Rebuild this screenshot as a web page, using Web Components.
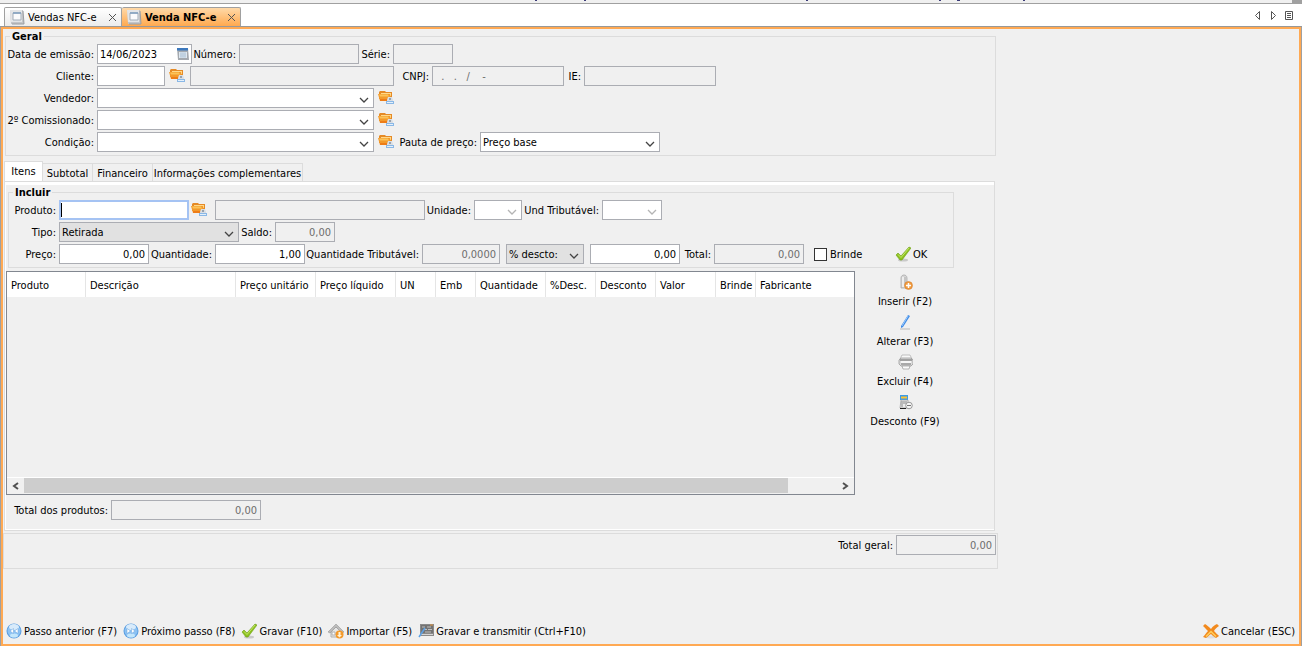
<!DOCTYPE html>
<html lang="pt-BR">
<head>
<meta charset="utf-8">
<title>Venda NFC-e</title>
<style>
    html, body {
        margin: 0;
        height: 100%;
        background: #f0f0f0;
    }
    body {
        font: 11px/15px "DejaVu Sans Condensed", "DejaVu Sans", "Noto Sans", sans-serif;
        color: #000;
        overflow: hidden;
    }
</style>
</head>
<body>
<sale-window></sale-window>

<script>
const icons = {
    form: `<path d="M1 1h13l1 14H2z" fill="#c3c5c8"/><path d="M1 1h12v12H2z" fill="#e3e5e7"/><path d="M4 4h8v7H4z" fill="#fafbfc" stroke="#a3adb8"/><path d="M4 4h8" stroke="#7f9fbf" stroke-width="1.500"/><path d="M14 2l1 13H3" fill="none" stroke="#9a9da1"/>`,
    folder: `<path d="M1 2l1-1h5l1 1h6v7H1z" fill="#e58a26"/><path d="M3 3h10v3H3z" fill="#ffd98a"/><path d="M0 4h12l1 7H2z" fill="#f39a2b"/><path d="M1 4.500h9l1 2H2z" fill="#fcc257"/><path d="M2 9h9v2H2z" fill="#ee7d17"/><path d="M10 7h4l1 3v2H9v-2z" fill="#d9dee4"/><path d="M11 8h2v2h-2z" fill="#98a2ad"/><path d="M8 11h8v3H8z" fill="#8ab8e6"/><path d="M9 12.500h6" stroke="#e4f0fb"/>`,
    calendar: `<path d="M2 2h11l1 12H3z" fill="#a4a9af"/><path d="M2 2h11v2.500H2z" fill="#3c78bc"/><path d="M4 6h8v6H4z" fill="#dfe8f0"/><path d="M5 8h6M5 10h6M6 6v6M8 6v6M10 6v6" stroke="#a9c0d6" stroke-width=".7"/>`,
    check: `<ellipse cx="8" cy="14" rx="5" ry="1.500" fill="#c9c9c9"/><path d="M1 9l2-2 3 3 8-9 2 1-9 12H5z" fill="#8cc21f" stroke="#6b9d12" stroke-width=".6"/><path d="M3 8.500l3 3L14 2" fill="none" stroke="#c4e56a"/>`,
    prev: `<circle cx="8" cy="8" r="7.500" fill="#5a9de0"/><circle cx="8" cy="8" r="6.500" fill="#8cc2f3"/><ellipse cx="8" cy="4" rx="5" ry="3" fill="#d8ebfb"/><ellipse cx="8" cy="12.500" rx="4" ry="2" fill="#c3e6fb"/><path d="M7.500 5.500v5L4 8zM12 5.500v5L8.500 8z" fill="#fff" stroke="#6ba2da" stroke-width=".5"/>`,
    next: `<circle cx="8" cy="8" r="7.500" fill="#5a9de0"/><circle cx="8" cy="8" r="6.500" fill="#8cc2f3"/><ellipse cx="8" cy="4" rx="5" ry="3" fill="#d8ebfb"/><ellipse cx="8" cy="12.500" rx="4" ry="2" fill="#c3e6fb"/><path d="M4 5.500v5L7.500 8zM8.500 5.500v5L12 8z" fill="#fff" stroke="#6ba2da" stroke-width=".5"/>`,
    home: `<path d="M3 8v6h10V8L8 4z" fill="#e6e6e6" stroke="#b0b0b0"/><path d="M0 9l8-8 8 8-2 1-6-6-6 6z" fill="#bcbcbc" stroke="#8e8e8e" stroke-width=".5"/><path d="M4 9h3v3H4z" fill="#fff" stroke="#b0b0b0"/><circle cx="11.500" cy="11.500" r="4" fill="#f39a2c"/><path d="M10.500 9h2v3H14l-2.500 2.500L9 12h1.500z" fill="#fff3d8"/>`,
    send: `<path d="M2 1h14v12H2z" fill="#8a8a8a"/><path d="M3 2h12v8H3z" fill="#737373"/><path d="M4 4h3M9 4h4M6 6.500h3M10 6.500h4M7 9h6" stroke="#c0c0c0"/><path d="M12 2h3" stroke="#e0933c"/><path d="M3 11.500h12" stroke="#d6d6d6"/><path d="M7 5L1 14" stroke="#5aa0e6" stroke-width="1.500"/>`,
    cancel: `<ellipse cx="8" cy="14" rx="6" ry="1.500" fill="#ddd"/><path d="M0 3l2-2c2 1 4 3 6 5 2-3 4-4 6-5l2 2c-2 1-4 3-5 5 2 2 4 4 5 5l-3 2c-2-1-4-3-5-4-2 1-3 3-5 4l-3-1c2-2 3-4 5-6C3 6 2 5 0 3z" fill="#f28a1e"/><path d="M3 13.500c2-2 3-3 5-5 2 2 3 3 5 5" fill="none" stroke="#ffcf5c" stroke-width="1.500"/>`,
    insert: `<path d="M4 4c0-4 6-4 6 0v10H4z" fill="#d6d6d6" stroke="#aaa" stroke-width=".8"/><path d="M6 3v10" stroke="#f6f6f6" stroke-width="1.500"/><path d="M8 3v8" stroke="#b4b4b4"/><circle cx="11.500" cy="11.500" r="4" fill="#f09a3e" stroke="#d07a24" stroke-width=".5"/><path d="M11.500 9v5M9 11.500h5" stroke="#fff" stroke-width="1.500"/>`,
    pencil: `<path d="M3 15h10" stroke="#b9b9b9"/><path d="M11 1l2 1-7 11-2 1v-2z" fill="#3f8be6"/><path d="M11 2L5 12" stroke="#9cc9fa"/>`,
    printer: `<path d="M5 1h8l2 4H3z" fill="#f8f8f8" stroke="#aaa" stroke-width=".7"/><path d="M2 6l2-2h10l2 2v4l-2 2H4l-2-2z" fill="#dcdcdc" stroke="#999" stroke-width=".8"/><path d="M3 6h12" stroke="#666"/><path d="M4 8h10" stroke="#fff" stroke-width="1.500"/><path d="M4 10h10" stroke="#777"/><path d="M5 12h8l-1 3H6z" fill="#fafafa" stroke="#999" stroke-width=".7"/>`,
    discount: `<path d="M3 1h8v5H3z" fill="#3b9be8"/><path d="M4 2.500h6v2H4z" fill="#ffc22e"/><path d="M4 6h7v8H3z" fill="#ececec" stroke="#999" stroke-width=".7"/><path d="M5 7v6M7 7v3M9 7v3" stroke="#888"/><path d="M3 14.500h6" stroke="#222"/><circle cx="12" cy="11.500" r="3.300" fill="#f5f5f5" stroke="#999"/><path d="M10 11.500h4" stroke="#777"/>`
};

const chevron = `<svg class="chevron" width="10" height="6" viewBox="0 0 10 6" aria-hidden="true"><path d="M1 1l4 4 4-4" fill="none" stroke="currentColor" stroke-width="1.300"/></svg>`;

// Shared look of the captioned inputs and drop-downs
const fieldStyle = `
    :host {
        display: inline-flex;
        align-items: center;
        flex: none;
        height: 22px;
    }
    label {
        box-sizing: border-box;
        width: var(--label, auto);
        padding-right: 3px;
        text-align: right;
        white-space: nowrap;
        display: flex;
        justify-content: flex-end;
    }
    .box {
        display: grid;
        align-items: center;
        width: var(--field, 90px);
        height: 20px;
    }
    .box > * {
        grid-area: 1 / 1;
    }
    input, select {
        box-sizing: border-box;
        width: 100%;
        height: 20px;
        margin: 0;
        padding: 0 2px;
        border: 1px solid #abadb3;
        border-radius: 0;
        outline: none;
        background: #fff;
        color: #000;
        font: inherit;
    }
    input:disabled {
        background: #f0f0f0;
        color: #6d6d6d;
    }
`;

class AppIcon extends HTMLElement {
    constructor() {
        super();
        this.attachShadow({ mode: 'open' });
    }

    connectedCallback() {
        this.shadowRoot.innerHTML = `
            <style>
                :host { display: inline-block; flex: none; width: 16px; height: 16px; }
                svg { display: block; width: 100%; height: 100%; }
            </style>
            <svg viewBox="0 0 16 16" aria-hidden="true">${icons[this.getAttribute('name')]}</svg>
        `;
    }
}

class TextField extends HTMLElement {
    constructor() {
        super();
        this.attachShadow({ mode: 'open' });
    }

    connectedCallback() {
        const label = this.getAttribute('label');
        this.shadowRoot.innerHTML = `
            <style>
                ${fieldStyle}
                :host([numeric]) input { text-align: right; padding-right: 3px; }
                :host([active]) input {
                    border: 2px solid #a5c3f3;
                    background: linear-gradient(#000, #000) 0 1px / 1px 14px no-repeat #fff;
                }
                ::slotted(app-icon) { grid-area: 1 / 1; justify-self: end; margin-right: 1px; }
            </style>
            ${label ? `<label for="input">${label}</label>` : ''}
            <div class="box">
                <input id="input" type="text" value="${this.getAttribute('value') || ''}"
                    ${label ? '' : `aria-label="${this.getAttribute('hint')}"`}
                    ${this.hasAttribute('disabled') ? 'disabled' : ''}>
                <slot></slot>
            </div>
        `;
    }
}

class SelectField extends HTMLElement {
    constructor() {
        super();
        this.attachShadow({ mode: 'open' });
    }

    connectedCallback() {
        const label = this.getAttribute('label');
        this.shadowRoot.innerHTML = `
            <style>
                ${fieldStyle}
                select { appearance: none; opacity: 1; }
                .chevron { justify-self: end; margin: 3px 5px 0 0; color: #444; pointer-events: none; }
                :host([gray]) select { background: #e1e1e1; }
                :host([disabled]) .chevron { color: #b4b4b4; }
            </style>
            ${label ? `<label for="select">${label}</label>` : ''}
            <div class="box">
                <select id="select" ${label ? '' : `aria-label="${this.getAttribute('hint')}"`}
                    ${this.hasAttribute('disabled') ? 'disabled' : ''}>
                    <option>${this.getAttribute('value') || ''}</option>
                </select>
                ${chevron}
            </div>
        `;
    }
}

class CheckField extends HTMLElement {
    constructor() {
        super();
        this.attachShadow({ mode: 'open' });
        this.shadowRoot.innerHTML = `
            <style>
                :host { display: inline-flex; flex: none; width: 81px; }
                label { display: flex; align-items: center; gap: 3px; }
                input {
                    appearance: none;
                    box-sizing: border-box;
                    width: 13px;
                    height: 13px;
                    margin: 0;
                    border: 1px solid #333;
                    background: #fff;
                }
                input:checked { background: #333; }
            </style>
            <label><input type="checkbox"><slot></slot></label>
        `;
    }
}

class ToolButton extends HTMLElement {
    constructor() {
        super();
        this.attachShadow({ mode: 'open' });
    }

    connectedCallback() {
        const hint = this.getAttribute('hint');
        this.shadowRoot.innerHTML = `
            <style>
                :host { display: inline-flex; flex: none; }
                button {
                    display: flex;
                    align-items: center;
                    gap: 2px;
                    margin: 0;
                    padding: 0;
                    border: 0;
                    background: none;
                    color: inherit;
                    font: inherit;
                    white-space: nowrap;
                }
                :host([stacked]) button { flex-direction: column; gap: 4px; }
            </style>
            <button type="button" ${hint ? `aria-label="${hint}"` : ''}>
                <app-icon name="${this.getAttribute('icon')}"></app-icon>
                <slot></slot>
            </button>
        `;
    }
}

class GroupBox extends HTMLElement {
    constructor() {
        super();
        this.attachShadow({ mode: 'open' });
    }

    connectedCallback() {
        this.shadowRoot.innerHTML = `
            <style>
                :host { display: block; }
                fieldset {
                    margin: 0;
                    padding: 0 0 2px;
                    border: 1px solid #dcdcdc;
                    min-width: 0;
                }
                legend {
                    margin-left: 4px;
                    padding: 2px 2px 0;
                    font-weight: bold;
                    line-height: 12px;
                }
            </style>
            <fieldset>
                <legend>${this.getAttribute('caption')}</legend>
                <slot></slot>
            </fieldset>
        `;
    }
}

class FieldRow extends HTMLElement {
    constructor() {
        super();
        this.attachShadow({ mode: 'open' });
        this.shadowRoot.innerHTML = `
            <style>
                :host { display: flex; align-items: center; height: 22px; }
            </style>
            <slot></slot>
        `;
    }
}

class DocumentTabs extends HTMLElement {
    constructor() {
        super();
        this.attachShadow({ mode: 'open' });
        this.shadowRoot.innerHTML = `
            <style>
                :host {
                    display: flex;
                    align-items: flex-end;
                    justify-content: space-between;
                    height: 22px;
                    padding: 0 7px 0 4px;
                    background: #fff;
                    border-top: 1px solid #a0a0a0;
                    border-bottom: 1px solid #989898;
                }
                .tabs, .nav { display: flex; }
                .tab {
                    box-sizing: border-box;
                    display: flex;
                    align-items: center;
                    height: 19px;
                    padding: 0 4px;
                    border: 1px solid #a0a0a0;
                    border-bottom: 0;
                    border-radius: 2px 2px 0 0;
                    background: linear-gradient(#fff, #ececec);
                    width: 118px;
                }
                .tab.active {
                    width: 119px;
                    background: linear-gradient(#ffd9a8, #ffa94f);
                    font-weight: bold;
                    border-left: 0;
                }
                button {
                    display: flex;
                    padding: 0;
                    margin: 0;
                    border: 0;
                    background: none;
                    font: inherit;
                    color: inherit;
                    white-space: nowrap;
                }
                .tab app-icon { margin-right: 3px; }
                .close { margin-left: auto; color: #555; }
                .nav { gap: 5px; align-self: center; color: #555; }
            </style>
            <div class="tabs" role="tablist">
                <div class="tab">
                    <app-icon name="form"></app-icon>
                    <button role="tab" aria-selected="false">Vendas NFC-e</button>
                    <button class="close" aria-label="Fechar Vendas NFC-e"><svg width="9" height="9"><path d="M1 1l7 7M8 1L1 8" stroke="currentColor"/></svg></button>
                </div>
                <div class="tab active">
                    <app-icon name="form"></app-icon>
                    <button role="tab" aria-selected="true">Venda NFC-e</button>
                    <button class="close" aria-label="Fechar Venda NFC-e"><svg width="9" height="9"><path d="M1 1l7 7M8 1L1 8" stroke="currentColor"/></svg></button>
                </div>
            </div>
            <div class="nav">
                <button aria-label="Anterior"><svg width="11" height="11"><path d="M7.500 1.500v8l-4-4z" fill="none" stroke="currentColor"/></svg></button>
                <button aria-label="Próxima"><svg width="11" height="11"><path d="M3.500 1.500v8l4-4z" fill="none" stroke="currentColor"/></svg></button>
                <button aria-label="Lista"><svg width="11" height="11"><path d="M1.500 1.500h7v8h-7zM3 3.500h4M3 5.500h4M3 7.500h4" fill="none" stroke="currentColor"/></svg></button>
            </div>
        `;
    }
}

class SectionTabs extends HTMLElement {
    constructor() {
        super();
        this.attachShadow({ mode: 'open' });
        this.shadowRoot.innerHTML = `
            <style>
                :host { display: block; }
                .tabs { display: flex; align-items: flex-end; height: 20px; }
                button {
                    box-sizing: border-box;
                    height: 18px;
                    margin: 0;
                    padding: 2px 0 0;
                    border: 1px solid #dcdcdc;
                    border-width: 1px 1px 0 0;
                    background: #f0f0f0;
                    color: inherit;
                    font: inherit;
                    white-space: nowrap;
                    width: 60px;
                }
                button:first-child { width: 39px; height: 20px; padding: 0; border-left-width: 1px; background: #fff; }
                button:nth-child(2) { width: 50px; }
                button:last-child { width: 150px; }
                .pane {
                    border: 1px solid #dcdcdc;
                    box-shadow: inset 1px -1px #fff;
                }
                .pane::before { content: ""; display: block; height: 3px; background: #fff; }
            </style>
            <div class="tabs" role="tablist">
                <button role="tab" aria-selected="true">Itens</button>
                <button role="tab">Subtotal</button>
                <button role="tab">Financeiro</button>
                <button role="tab">Informações complementares</button>
            </div>
            <div class="pane" role="tabpanel"><slot></slot></div>
        `;
    }
}

class ItemsTable extends HTMLElement {
    constructor() {
        super();
        this.attachShadow({ mode: 'open' });
    }

    connectedCallback() {
        const columns = [
            ['Produto', 79], ['Descrição', 150], ['Preço unitário', 80], ['Preço líquido', 80],
            ['UN', 40], ['Emb', 40], ['Quantidade', 70], ['%Desc.', 50], ['Desconto', 60],
            ['Valor', 60], ['Brinde', 40], ['Fabricante', 98]
        ];
        this.shadowRoot.innerHTML = `
            <style>
                :host {
                    box-sizing: border-box;
                    display: flex;
                    flex-direction: column;
                    justify-content: space-between;
                    height: 224px;
                    border: 1px solid #828790;
                }
                table { width: 100%; border-collapse: collapse; table-layout: fixed; }
                th {
                    height: 25px;
                    padding: 1px 0 0 4px;
                    box-sizing: border-box;
                    background: #fff;
                    box-shadow: inset -1px 0 #e5e5e5;
                    font-weight: normal;
                    text-align: left;
                    white-space: nowrap;
                }
                th:last-child { box-shadow: none; }
                .scroll { display: flex; height: 16px; border-top: 1px solid #fff; }
                .scroll button {
                    width: 17px;
                    padding: 0;
                    border: 0;
                    background: none;
                    color: #505050;
                }
                svg { display: block; margin: auto; }
                .track { flex: 1; }
                .thumb { width: 94%; height: 15px; background: #cdcdcd; }
            </style>
            <table>
                <colgroup>${columns.map(c => `<col style="width: ${c[1]}px">`).join('')}</colgroup>
                <thead><tr>${columns.map(c => `<th scope="col">${c[0]}</th>`).join('')}</tr></thead>
                <tbody></tbody>
            </table>
            <div class="scroll">
                <button aria-label="Rolar para a esquerda"><svg width="7" height="8"><path d="M6 1L2 4l4 3" fill="none" stroke="currentColor" stroke-width="2"/></svg></button>
                <div class="track"><div class="thumb"></div></div>
                <button aria-label="Rolar para a direita"><svg width="7" height="8"><path d="M1 1l4 3-4 3" fill="none" stroke="currentColor" stroke-width="2"/></svg></button>
            </div>
        `;
    }
}

class SaleWindow extends HTMLElement {
    constructor() {
        super();
        this.attachShadow({ mode: 'open' });
    }

    connectedCallback() {
        this.shadowRoot.innerHTML = `
            <style>
                :host { display: flex; flex-direction: column; height: 100vh; }
                .strip { display: flex; justify-content: space-between; height: 3px; flex: none; }
                .strip i { width: 10px; background: #a0a0a0; }
                .strip svg { display: block; }
                .frame {
                    box-sizing: border-box;
                    flex: 1;
                    display: flex;
                    flex-direction: column;
                    justify-content: space-between;
                    border: 2px solid #ffa953;
                    margin: 0 1px;
                    box-shadow: 1px 0 #a0a0a0, -1px 0 #a0a0a0;
                }
                .form { max-width: 995px; }
                .general { margin: 0 2px 5px; }
                section-tabs { margin: 0 3px 0 1px; }
                .include { margin: 0 40px 3px 3px; }
                .body { display: flex; }
                items-table { flex: 1; max-width: 849px; margin-left: 1px; }
                .side {
                    display: flex;
                    flex-direction: column;
                    gap: 5px;
                    width: 100px;
                    padding-top: 3px;
                    align-items: center;
                }
                .gap { flex: none; width: 2px; }
                .gap.m { width: 6px; }
                .gap.l { width: 10px; }
                tool-button[hint] { margin: 0 5px 0 4px; }
                .include tool-button[hint] { margin: 0 8px 0 2px; }
                .sum { padding: 4px 0 9px 8px; }
                .grand {
                    display: flex;
                    justify-content: flex-end;
                    margin-top: 2px;
                    padding: 0 1px 12px;
                    border: 1px solid #dcdcdc;
                }
                .footer { display: flex; justify-content: space-between; padding: 0 4px 5px 3px; }
                .footer div { display: flex; gap: 6px; }
            </style>
            <div class="strip">
                <svg width="1026" height="1" aria-hidden="true"><path d="M535 0h2v1h-2zM584 0h2v1h-2zM806 0h2v1h-2zM939 0h2v1h-2zM957 0h3v1h-3zM1023 0h2v1h-2z" fill="#3c3c78"/></svg>
                <i></i>
            </div>
            <document-tabs></document-tabs>
            <div class="frame">
                <div class="form">
                    <group-box class="general" caption="Geral">
                        <field-row>
                            <text-field label="Data de emissão:" value="14/06/2023" style="--label: 91px; --field: 95px"><app-icon name="calendar"></app-icon></text-field>
                            <text-field label="Número:" disabled style="--label: 47px; --field: 120px"></text-field>
                            <text-field label="Série:" disabled style="--label: 34px; --field: 60px"></text-field>
                        </field-row>
                        <field-row>
                            <text-field label="Cliente:" style="--label: 91px; --field: 68px"></text-field>
                            <tool-button icon="folder" hint="Buscar cliente"></tool-button>
                            <text-field hint="Nome do cliente" disabled style="--field: 204px"></text-field>
                            <text-field label="CNPJ:" value="&nbsp; .&nbsp;&nbsp; .&nbsp;&nbsp; /&nbsp;&nbsp;&nbsp; -" disabled style="--label: 38px; --field: 132px"></text-field>
                            <text-field label="IE:" disabled style="--label: 20px; --field: 132px"></text-field>
                        </field-row>
                        <field-row>
                            <select-field label="Vendedor:" style="--label: 91px; --field: 277px"></select-field>
                            <tool-button icon="folder" hint="Buscar vendedor"></tool-button>
                        </field-row>
                        <field-row>
                            <select-field label="2º Comissionado:" style="--label: 91px; --field: 277px"></select-field>
                            <tool-button icon="folder" hint="Buscar comissionado"></tool-button>
                        </field-row>
                        <field-row>
                            <select-field label="Condição:" style="--label: 91px; --field: 277px"></select-field>
                            <tool-button icon="folder" hint="Buscar condição"></tool-button>
                            <select-field label="Pauta de preço:" value="Preço base" style="--label: 81px; --field: 180px"></select-field>
                        </field-row>
                    </group-box>
                    <section-tabs>
                        <group-box class="include" caption="Incluir">
                            <field-row>
                                <text-field label="Produto:" active style="--label: 50px; --field: 130px"></text-field>
                                <tool-button icon="folder" hint="Buscar produto"></tool-button>
                                <text-field hint="Descrição do produto" disabled style="--field: 210px"></text-field>
                                <select-field label="Unidade:" disabled style="--label: 49px; --field: 48px"></select-field>
                                <select-field label="Und Tributável:" disabled style="--label: 80px; --field: 60px"></select-field>
                            </field-row>
                            <field-row>
                                <select-field label="Tipo:" value="Retirada" gray style="--label: 50px; --field: 180px"></select-field>
                                <text-field label="Saldo:" value="0,00" numeric disabled style="--label: 36px; --field: 60px"></text-field>
                            </field-row>
                            <field-row>
                                <text-field label="Preço:" value="0,00" numeric style="--label: 50px; --field: 90px"></text-field>
                                <text-field label="Quantidade:" value="1,00" numeric style="--label: 66px; --field: 90px"></text-field>
                                <text-field label="Quantidade Tributável:" value="0,0000" numeric disabled style="--label: 117px; --field: 78px"></text-field>
                                <span class="gap m"></span>
                                <select-field hint="Tipo de desconto" value="% descto:" gray style="--field: 78px"></select-field>
                                <span class="gap m"></span>
                                <text-field hint="Valor do desconto" value="0,00" numeric style="--field: 90px"></text-field>
                                <text-field label="Total:" value="0,00" numeric disabled style="--label: 34px; --field: 90px"></text-field>
                                <span class="gap l"></span>
                                <check-field>Brinde</check-field>
                                <tool-button icon="check">OK</tool-button>
                            </field-row>
                        </group-box>
                        <div class="body">
                            <items-table></items-table>
                            <div class="side">
                                <tool-button stacked icon="insert">Inserir (F2)</tool-button>
                                <tool-button stacked icon="pencil">Alterar (F3)</tool-button>
                                <tool-button stacked icon="printer">Excluir (F4)</tool-button>
                                <tool-button stacked icon="discount">Desconto (F9)</tool-button>
                            </div>
                        </div>
                        <div class="sum">
                            <text-field label="Total dos produtos:" value="0,00" numeric disabled style="--label: 98px; --field: 150px"></text-field>
                        </div>
                    </section-tabs>
                    <div class="grand">
                        <text-field label="Total geral:" value="0,00" numeric disabled style="--field: 100px"></text-field>
                    </div>
                </div>
                <div class="footer">
                    <div>
                        <tool-button icon="prev">Passo anterior (F7)</tool-button>
                        <tool-button icon="next">Próximo passo (F8)</tool-button>
                        <tool-button icon="check">Gravar (F10)</tool-button>
                        <tool-button icon="home">Importar (F5)</tool-button>
                        <tool-button icon="send">Gravar e transmitir (Ctrl+F10)</tool-button>
                    </div>
                    <tool-button icon="cancel">Cancelar (ESC)</tool-button>
                </div>
            </div>
        `;
    }
}

customElements.define('app-icon', AppIcon);
customElements.define('text-field', TextField);
customElements.define('select-field', SelectField);
customElements.define('check-field', CheckField);
customElements.define('tool-button', ToolButton);
customElements.define('group-box', GroupBox);
customElements.define('field-row', FieldRow);
customElements.define('document-tabs', DocumentTabs);
customElements.define('section-tabs', SectionTabs);
customElements.define('items-table', ItemsTable);
customElements.define('sale-window', SaleWindow);
</script>
</body>
</html>
